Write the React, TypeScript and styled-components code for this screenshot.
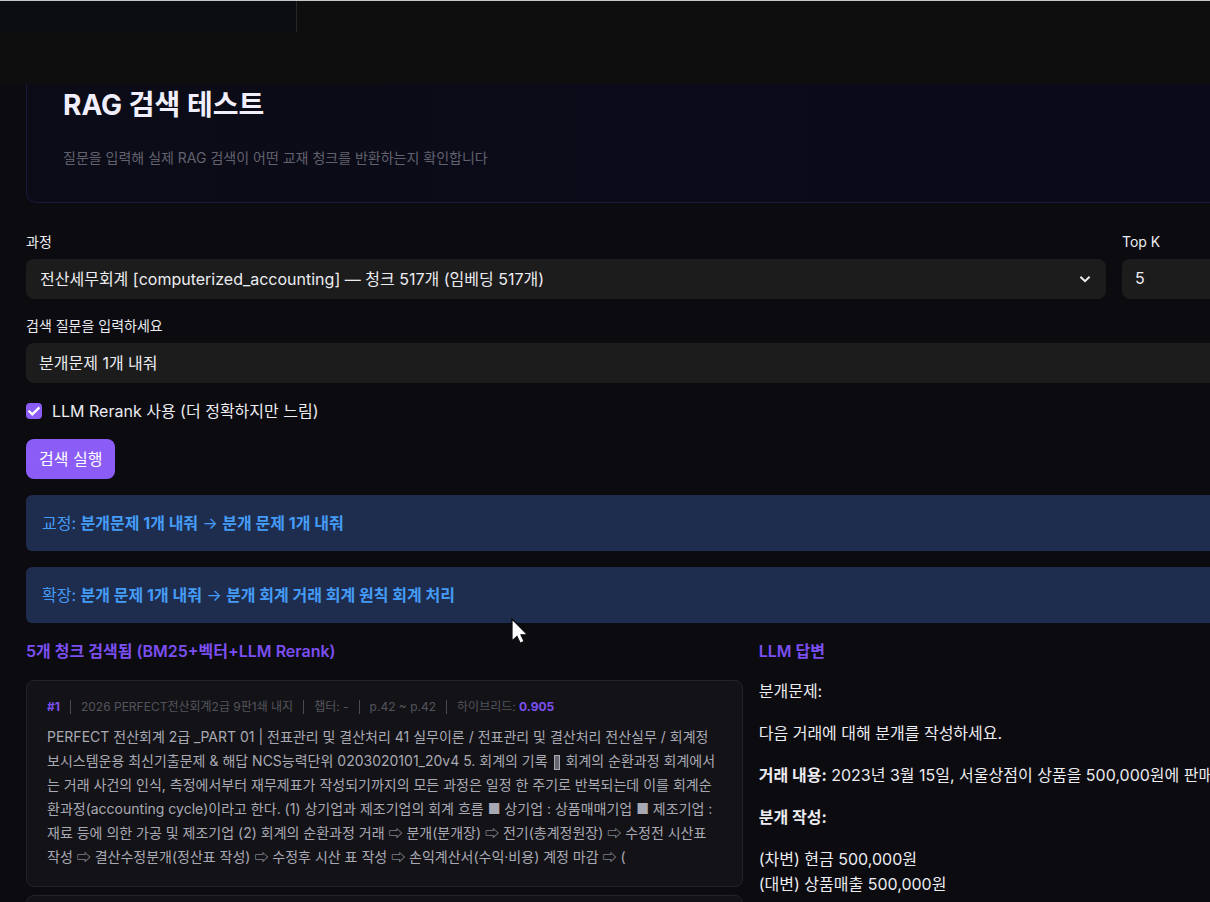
import React, { useState } from "react";
import styled, { createGlobalStyle, css } from "styled-components";

const GlobalStyle = createGlobalStyle`
  *, *::before, *::after { box-sizing: border-box; }
  body {
    margin: 0;
    background: #0b0b10;
    color: #ececf1;
    font-family: Inter, "Noto Sans CJK KR", sans-serif;
    font-size: 16px;
  }
  h1, h2, p { margin: 0; }
  input, select, button { font: inherit; color: inherit; }
`;

const Page = styled.div`
  height: 100vh;
  overflow: hidden;
  background: #0b0b10;
`;

const TopBar = styled.header`
  height: 84px;
  border-top: 1px solid #c4c8c7;
  background: #0e0e0e;
`;

const SidebarEdge = styled.div`
  width: 297px;
  height: 31px;
  border-right: 1px solid #262628;
  background: #0c0c13;
`;

const Main = styled.main`
  display: flex;
  flex-direction: column;
  gap: 16px;
  padding-left: 26px;
`;

const Hero = styled.section`
  display: flex;
  flex-direction: column;
  gap: 22px;
  margin-bottom: 12px;
  padding: 0 36px 34px;
  border: 1px solid #18183a;
  border-width: 0 0 1px 1px;
  border-bottom-left-radius: 10px;
  background: linear-gradient(90deg, #0c0c18, #0a0a1a);
`;

const Title = styled.h1`
  font-size: 28px;
  line-height: 42px;
  font-weight: 700;
  color: #f1effc;
`;

const Subtitle = styled.p`
  font-size: 14px;
  line-height: 20px;
  color: #62626e;
`;

const FieldRow = styled.div`
  display: grid;
  grid-template-columns: minmax(0, 1fr) 88px;
  gap: 16px;
`;

const Field = styled.div`
  display: flex;
  flex-direction: column;
  gap: 6px;
`;

const Label = styled.label`
  font-size: 14px;
  line-height: 22px;
`;

const control = css`
  width: 100%;
  height: 40px;
  border: 0;
  background: #1c1c1d;
  outline: none;
`;

const TextInput = styled.input`
  ${control}
  padding: 0 13px 3px;
  border-radius: 8px 0 0 8px;
`;

const SelectWrap = styled.div`
  position: relative;
`;

const Select = styled.select`
  ${control}
  padding: 0 14px;
  appearance: none;
  border-radius: 8px;
`;

const Chevron = styled.svg`
  position: absolute;
  top: 15px;
  right: 15px;
  pointer-events: none;
`;

const CheckLabel = styled.label`
  display: flex;
  align-items: center;
  gap: 10px;
  line-height: 24px;
`;

const CheckBox = styled.input`
  appearance: none;
  width: 16px;
  height: 16px;
  margin: 0;
  border-radius: 4px;
  background: #1c1c1d;
  &:checked {
    background: #8b5cf6
      url("data:image/svg+xml,%3Csvg xmlns='http://www.w3.org/2000/svg' viewBox='0 0 16 16'%3E%3Cpath d='M2.6 7.8l3.7 3.6 7.1-7' fill='none' stroke='white' stroke-width='2.2'/%3E%3C/svg%3E");
  }
`;

const RunButton = styled.button`
  align-self: flex-start;
  height: 40px;
  padding: 0 13px 3px;
  border: 0;
  border-radius: 8px;
  background: #8b5cf6;
  color: #fff;
`;

const Notice = styled.p`
  padding: 16px;
  border-radius: 6px 0 0 6px;
  background: #1e2c4e;
  color: #459cf6;
  line-height: 24px;
`;

const Results = styled.div`
  display: grid;
  grid-template-columns: minmax(0, 27fr) minmax(0, 17fr);
  gap: 16px;
`;

const SectionTitle = styled.h2`
  font-size: 16px;
  line-height: 24px;
  font-weight: 600;
  color: #7c4ff0;
`;

const ChunkList = styled.div`
  display: flex;
  flex-direction: column;
  gap: 8px;
  margin-top: 17px;
`;

const Chunk = styled.article`
  padding: 18px 20px 17px;
  border: 1px solid #242428;
  border-radius: 8px;
  background: #131317;
`;

const Meta = styled.div`
  display: flex;
  gap: 10px;
  margin-bottom: 10px;
  font-size: 12px;
  line-height: 16px;
  color: #53535c;
  b { color: #7c4ff0; }
`;

const Bar = styled.span`
  width: 1px;
  height: 14px;
  align-self: center;
  background: #4a4a50;
`;

const ChunkText = styled.p`
  font-size: 14px;
  line-height: 24px;
  color: #a9a9b4;
  white-space: nowrap;
`;

const MissingGlyph = styled.span`
  display: inline-block;
  width: 6px;
  height: 15px;
  margin: 0 2px;
  border: 1px solid #a9a9b4;
  background: #66666f;
  vertical-align: middle;
`;

const Answer = styled.div`
  display: flex;
  flex-direction: column;
  gap: 17px;
  margin-top: 16px;
  line-height: 25px;
  white-space: nowrap;
  overflow: hidden;
`;

const Pointer = styled.svg`
  position: absolute;
  left: 510px;
  top: 617px;
  pointer-events: none;
`;

export default function App() {
  const [query, setQuery] = useState("분개문제 1개 내줘");
  const [topK, setTopK] = useState("5");
  const [rerank, setRerank] = useState(true);

  return (
    <Page>
      <GlobalStyle />
      <TopBar>
        <SidebarEdge />
      </TopBar>
      <Main>
        <Hero>
          <Title>RAG 검색 테스트</Title>
          <Subtitle>질문을 입력해 실제 RAG 검색이 어떤 교재 청크를 반환하는지 확인합니다</Subtitle>
        </Hero>

        <FieldRow>
          <Field>
            <Label htmlFor="course">과정</Label>
            <SelectWrap>
              <Select id="course">
                <option>전산세무회계 [computerized_accounting] — 청크 517개 (임베딩 517개)</option>
              </Select>
              <Chevron width="12" height="10" viewBox="0 0 12 10" fill="none" stroke="#ececf1" strokeWidth="2">
                <path d="M1.4 2.8L6 7.2l4.6-4.4" />
              </Chevron>
            </SelectWrap>
          </Field>
          <Field>
            <Label htmlFor="topk">Top K</Label>
            <TextInput id="topk" value={topK} onChange={(e) => setTopK(e.target.value)} />
          </Field>
        </FieldRow>

        <Field>
          <Label htmlFor="query">검색 질문을 입력하세요</Label>
          <TextInput id="query" value={query} onChange={(e) => setQuery(e.target.value)} />
        </Field>

        <CheckLabel>
          <CheckBox type="checkbox" checked={rerank} onChange={(e) => setRerank(e.target.checked)} />
          LLM Rerank 사용 (더 정확하지만 느림)
        </CheckLabel>

        <RunButton type="button">검색 실행</RunButton>

        <Notice>
          교정: <b>분개문제 1개 내줘</b> → <b>분개 문제 1개 내줘</b>
        </Notice>
        <Notice>
          확장: <b>분개 문제 1개 내줘</b> → <b>분개 회계 거래 회계 원칙 회계 처리</b>
        </Notice>

        <Results>
          <section>
            <SectionTitle>5개 청크 검색됨 (BM25+벡터+LLM Rerank)</SectionTitle>
            <ChunkList>
              <Chunk>
                <Meta>
                  <b>#1</b>
                  <Bar />
                  <span>2026 PERFECT전산회계2급 9판1쇄 내지</span>
                  <Bar />
                  <span>챕터: -</span>
                  <Bar />
                  <span>p.42 ~ p.42</span>
                  <Bar />
                  <span>
                    하이브리드: <b>0.905</b>
                  </span>
                </Meta>
                <ChunkText>
                  PERFECT 전산회계 2급 _PART 01 | 전표관리 및 결산처리 41 실무이론 / 전표관리 및 결산처리 전산실무 / 회계정
                  <br />
                  보시스템운용 최신기출문제 &amp; 해답 NCS능력단위 0203020101_20v4 5. 회계의 기록 <MissingGlyph /> 회계의 순환과정 회계에서
                  <br />
                  는 거래 사건의 인식, 측정에서부터 재무제표가 작성되기까지의 모든 과정은 일정 한 주기로 반복되는데 이를 회계순
                  <br />
                  환과정(accounting cycle)이라고 한다. (1) 상기업과 제조기업의 회계 흐름 ■ 상기업 : 상품매매기업 ■ 제조기업 :
                  <br />
                  재료 등에 의한 가공 및 제조기업 (2) 회계의 순환과정 거래 ⇨ 분개(분개장) ⇨ 전기(총계정원장) ⇨ 수정전 시산표
                  <br />
                  작성 ⇨ 결산수정분개(정산표 작성) ⇨ 수정후 시산 표 작성 ⇨ 손익계산서(수익·비용) 계정 마감 ⇨ (
                </ChunkText>
              </Chunk>
              <Chunk />
            </ChunkList>
          </section>
          <section>
            <SectionTitle>LLM 답변</SectionTitle>
            <Answer>
              <p>분개문제:</p>
              <p>다음 거래에 대해 분개를 작성하세요.</p>
              <p>
                <b>거래 내용:</b> 2023년 3월 15일, 서울상점이 상품을 500,000원에 판매
              </p>
              <p>
                <b>분개 작성:</b>
              </p>
              <p>
                (차변) 현금 500,000원
                <br />
                (대변) 상품매출 500,000원
              </p>
            </Answer>
          </section>
        </Results>
      </Main>
      <Pointer width="20" height="28" viewBox="0 0 20 28">
        <path d="M2 2v22l5-4.6 3.2 6.8 4-1.8-3.2-6.6h6.6z" fill="#fff" stroke="#0b0b10" strokeWidth="1.2" />
      </Pointer>
    </Page>
  );
}
